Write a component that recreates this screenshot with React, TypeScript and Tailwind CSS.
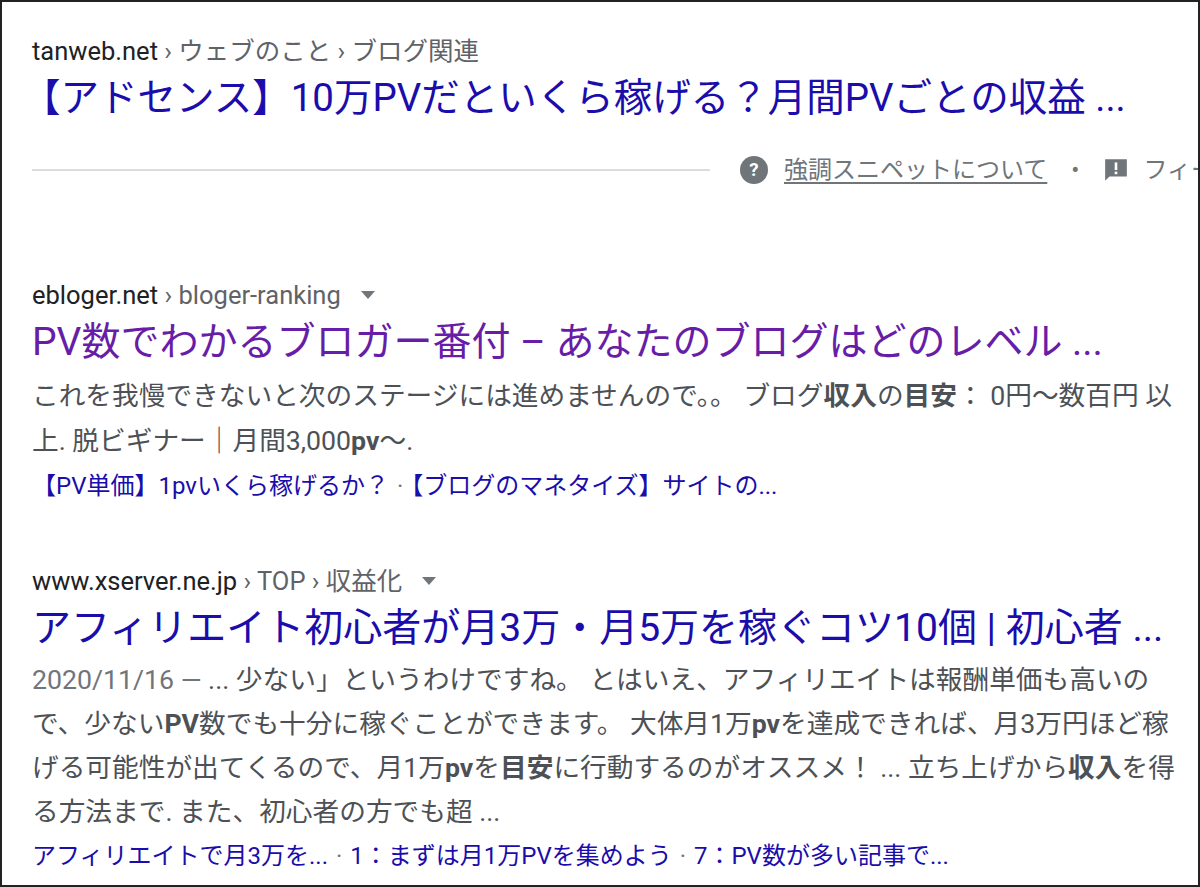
const font = { fontFamily: 'Roboto, "Noto Sans CJK JP", sans-serif' };

function Arrow() {
  return <span className="ml-5 inline-block w-0 h-0 border-l-[7px] border-r-[7px] border-t-[8px] border-l-transparent border-r-transparent border-t-[#70757a] align-middle" />;
}

export default function App() {
  return (
    <div className="w-[1200px] h-[887px] overflow-hidden bg-white border-2 border-[#222] relative" style={font}>
      <div className="pl-[30px]">
        {/* result 1 */}
        <div className="pt-[30px] text-[25.5px] leading-[38px] text-[#202124]">
          tanweb.net<span className="text-[#5f6368]"> › ウェブのこと › ブログ関連</span>
        </div>
        <div className="text-[38.5px] leading-[56px] text-[#1a0dab] whitespace-nowrap -ml-[10px]">【アドセンス】10万PVだといくら稼げる？月間PVごとの収益 ...</div>
        <div className="mt-[26px] flex items-center whitespace-nowrap text-[24px] text-[#70757a]">
          <div className="w-[678px] h-[2px] bg-[#dadce0] shrink-0" />
          <svg className="ml-[30px] shrink-0" width="28" height="28" viewBox="0 0 24 24"><circle cx="12" cy="12" r="12" fill="#70757a" /><text x="12" y="17.5" textAnchor="middle" fontSize="16" fontWeight="700" fill="#fff" fontFamily="Roboto">?</text></svg>
          <span className="ml-[16px] underline underline-offset-4">強調スニペットについて</span>
          <span className="ml-[24px]">•</span>
          <svg className="ml-[24px] shrink-0" width="26" height="26" viewBox="0 0 24 24"><path d="M2 2h20v16H6l-4 4z" fill="#70757a" /><rect x="10.8" y="5" width="2.4" height="7" fill="#fff" /><rect x="10.8" y="13.5" width="2.4" height="2.4" fill="#fff" /></svg>
          <span className="ml-[14px]">フィードバック</span>
        </div>

        {/* result 2 */}
        <div className="mt-[88px] text-[25.5px] leading-[38px] text-[#202124] flex items-center">
          ebloger.net<span className="text-[#5f6368]">&nbsp;› bloger-ranking</span><Arrow />
        </div>
        <div className="text-[39px] leading-[56px] text-[#681da8] whitespace-nowrap">PV数でわかるブロガー番付 – あなたのブログはどのレベル ...</div>
        <div className="mt-[4px] text-[26.7px] leading-[45px] text-[#4d5156] pr-[14px]">
          これを我慢できないと次のステージには進めませんので。。 ブログ<b>収入</b>の<b>目安</b>： 0円〜数百円 以上. 脱ビギナー｜月間3,000<b>pv</b>〜.
        </div>
        <div className="mt-[2px] text-[24px] leading-[40px] text-[#1a0dab] whitespace-nowrap">
          【PV単価】1pvいくら稼げるか？<span className="text-[#70757a] mx-[8px]">·</span>【ブログのマネタイズ】サイトの...
        </div>

        {/* result 3 */}
        <div className="mt-[56px] text-[25.5px] leading-[38px] text-[#202124] flex items-center">
          www.xserver.ne.jp<span className="text-[#5f6368]">&nbsp;› TOP › 収益化</span><Arrow />
        </div>
        <div className="text-[39px] leading-[56px] text-[#1a0dab] whitespace-nowrap">アフィリエイト初心者が月3万・月5万を稼ぐコツ10個 | 初心者 ...</div>
        <div className="mt-[2px] text-[26.7px] leading-[44px] text-[#4d5156] pr-[14px]">
          <span className="text-[#70757a]">2020/11/16 — </span>... 少ない」というわけですね。 とはいえ、アフィリエイトは報酬単価も高いので、少ない<b>PV</b>数でも十分に稼ぐことができます。 大体月1万<b>pv</b>を達成できれば、月3万円ほど稼げる可能性が出てくるので、月1万<b>pv</b>を<b>目安</b>に行動するのがオススメ！ ... 立ち上げから<b>収入</b>を得る方法まで. また、初心者の方でも超 ...
        </div>
        <div className="mt-[2px] text-[24px] leading-[40px] text-[#1a0dab] whitespace-nowrap">
          アフィリエイトで月3万を...<span className="text-[#70757a] mx-[8px]">·</span>1：まずは月1万PVを集めよう<span className="text-[#70757a] mx-[8px]">·</span>7：PV数が多い記事で...
        </div>
      </div>
    </div>
  );
}
